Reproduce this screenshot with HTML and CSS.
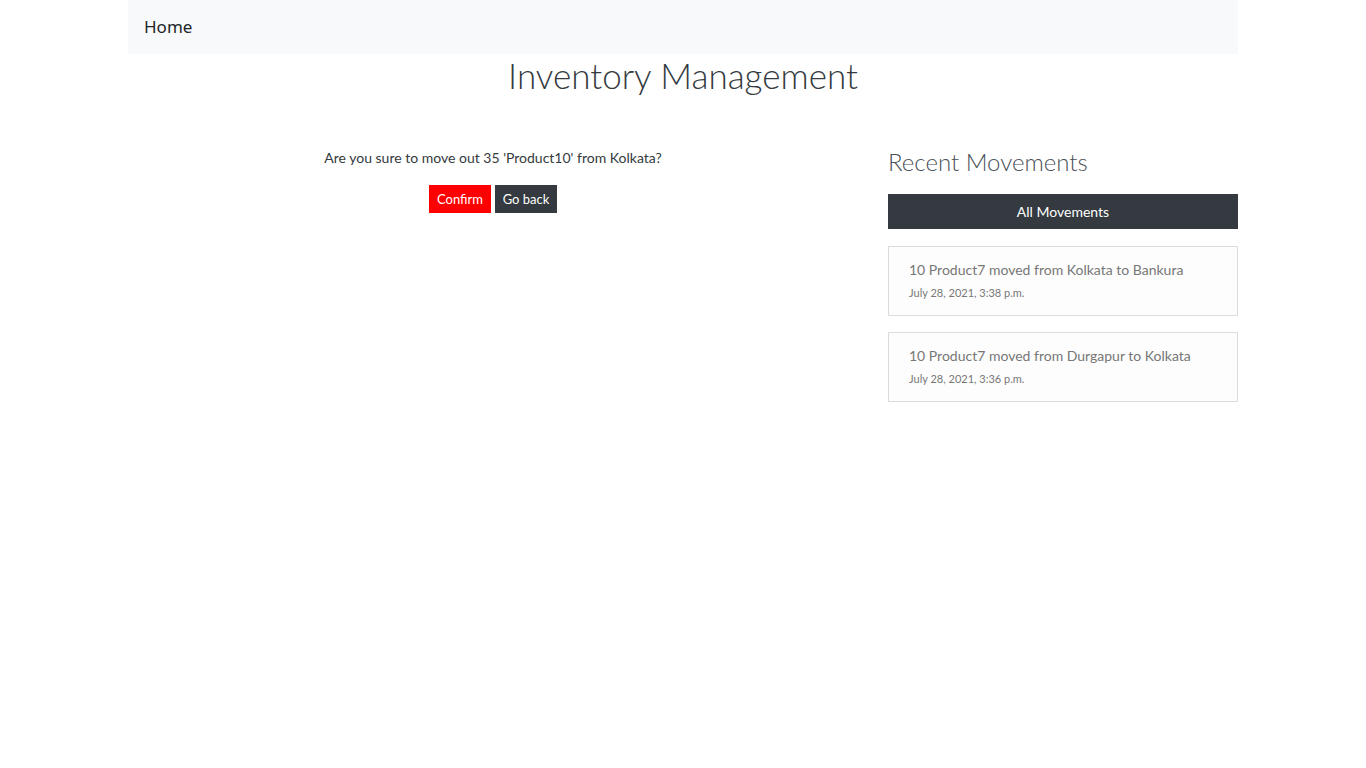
FILE: index.html
```html
<!DOCTYPE html>
<html lang="en">
<head>
<meta charset="utf-8">
<title>Inventory Management</title>
<link rel="stylesheet" href="styles.css">
</head>
<body>
<div class="container">
  <nav class="navbar"><a class="brand" href="#">Home</a></nav>
  <h1 class="title">Inventory Management</h1>
  <div class="row">
    <main class="main">
      <p class="question">Are you sure to move out 35 'Product10' from Kolkata?</p>
      <div class="actions">
        <button class="btn btn-red">Confirm</button>
        <button class="btn btn-dark">Go back</button>
      </div>
    </main>
    <aside class="side">
      <h3 class="side-title">Recent Movements</h3>
      <a class="all-btn" href="#">All Movements</a>
      <div class="card">
        <div class="card-text">10 Product7 moved from Kolkata to Bankura</div>
        <div class="card-date">July 28, 2021, 3:38 p.m.</div>
      </div>
      <div class="card">
        <div class="card-text">10 Product7 moved from Durgapur to Kolkata</div>
        <div class="card-date">July 28, 2021, 3:36 p.m.</div>
      </div>
    </aside>
  </div>
</div>
</body>
</html>
```

FILE: styles.css
```css
* { box-sizing: border-box; }
body {
  margin: 0;
  background: #fff;
  font-family: "Lato", "Noto Sans", sans-serif;
  color: #212529;
  font-size: 14px;
}
.container {
  width: 1110px;
  margin: 0 auto;
}
.navbar {
  background: #f8f9fa;
  height: 54px;
  display: flex;
  align-items: center;
  padding: 0 16px;
}
.brand {
  font-family: "Noto Sans", sans-serif;
  font-size: 17px;
  color: #212529;
  text-decoration: none;
  margin-top: -2px;
}
.title {
  margin: -2px 0 0;
  text-align: center;
  font-size: 35px;
  font-weight: 300;
  color: #343a40;
  line-height: 46px;
}
.row {
  display: grid;
  grid-template-columns: 730px 350px;
  column-gap: 30px;
  margin-top: 33px;
}
.main {
  text-align: center;
  padding-top: 16px;
}
.question {
  margin: 0;
  font-size: 14px;
  color: #343a40;
  line-height: 22px;
}
.actions {
  margin-top: 16px;
  display: flex;
  justify-content: center;
  gap: 4px;
}
.btn {
  border: 0;
  border-radius: 0;
  height: 28px;
  width: 62px;
  padding: 0;
  font-family: inherit;
  font-size: 13px;
  color: #fff;
  cursor: pointer;
}
.btn-red { background: #ff0000; }
.btn-dark { background: #343a40; }
.side-title {
  margin: 15px 0 0;
  font-size: 24px;
  font-weight: 300;
  color: #495057;
  line-height: 32px;
}
.all-btn {
  display: block;
  margin-top: 16px;
  height: 35px;
  line-height: 35px;
  background: #343a40;
  color: #fff;
  text-align: center;
  text-decoration: none;
  font-size: 14px;
}
.card {
  margin-top: 17px;
  border: 1px solid #dcdcdc;
  background: #fdfdfd;
  height: 70px;
  padding: 12px 20px 0;
}
.card + .card { margin-top: 16px; }
.card-text {
  font-size: 14px;
  color: #777;
  line-height: 22px;
}
.card-date {
  font-size: 11px;
  color: #777;
  margin-top: 4px;
  line-height: 16px;
}
```
